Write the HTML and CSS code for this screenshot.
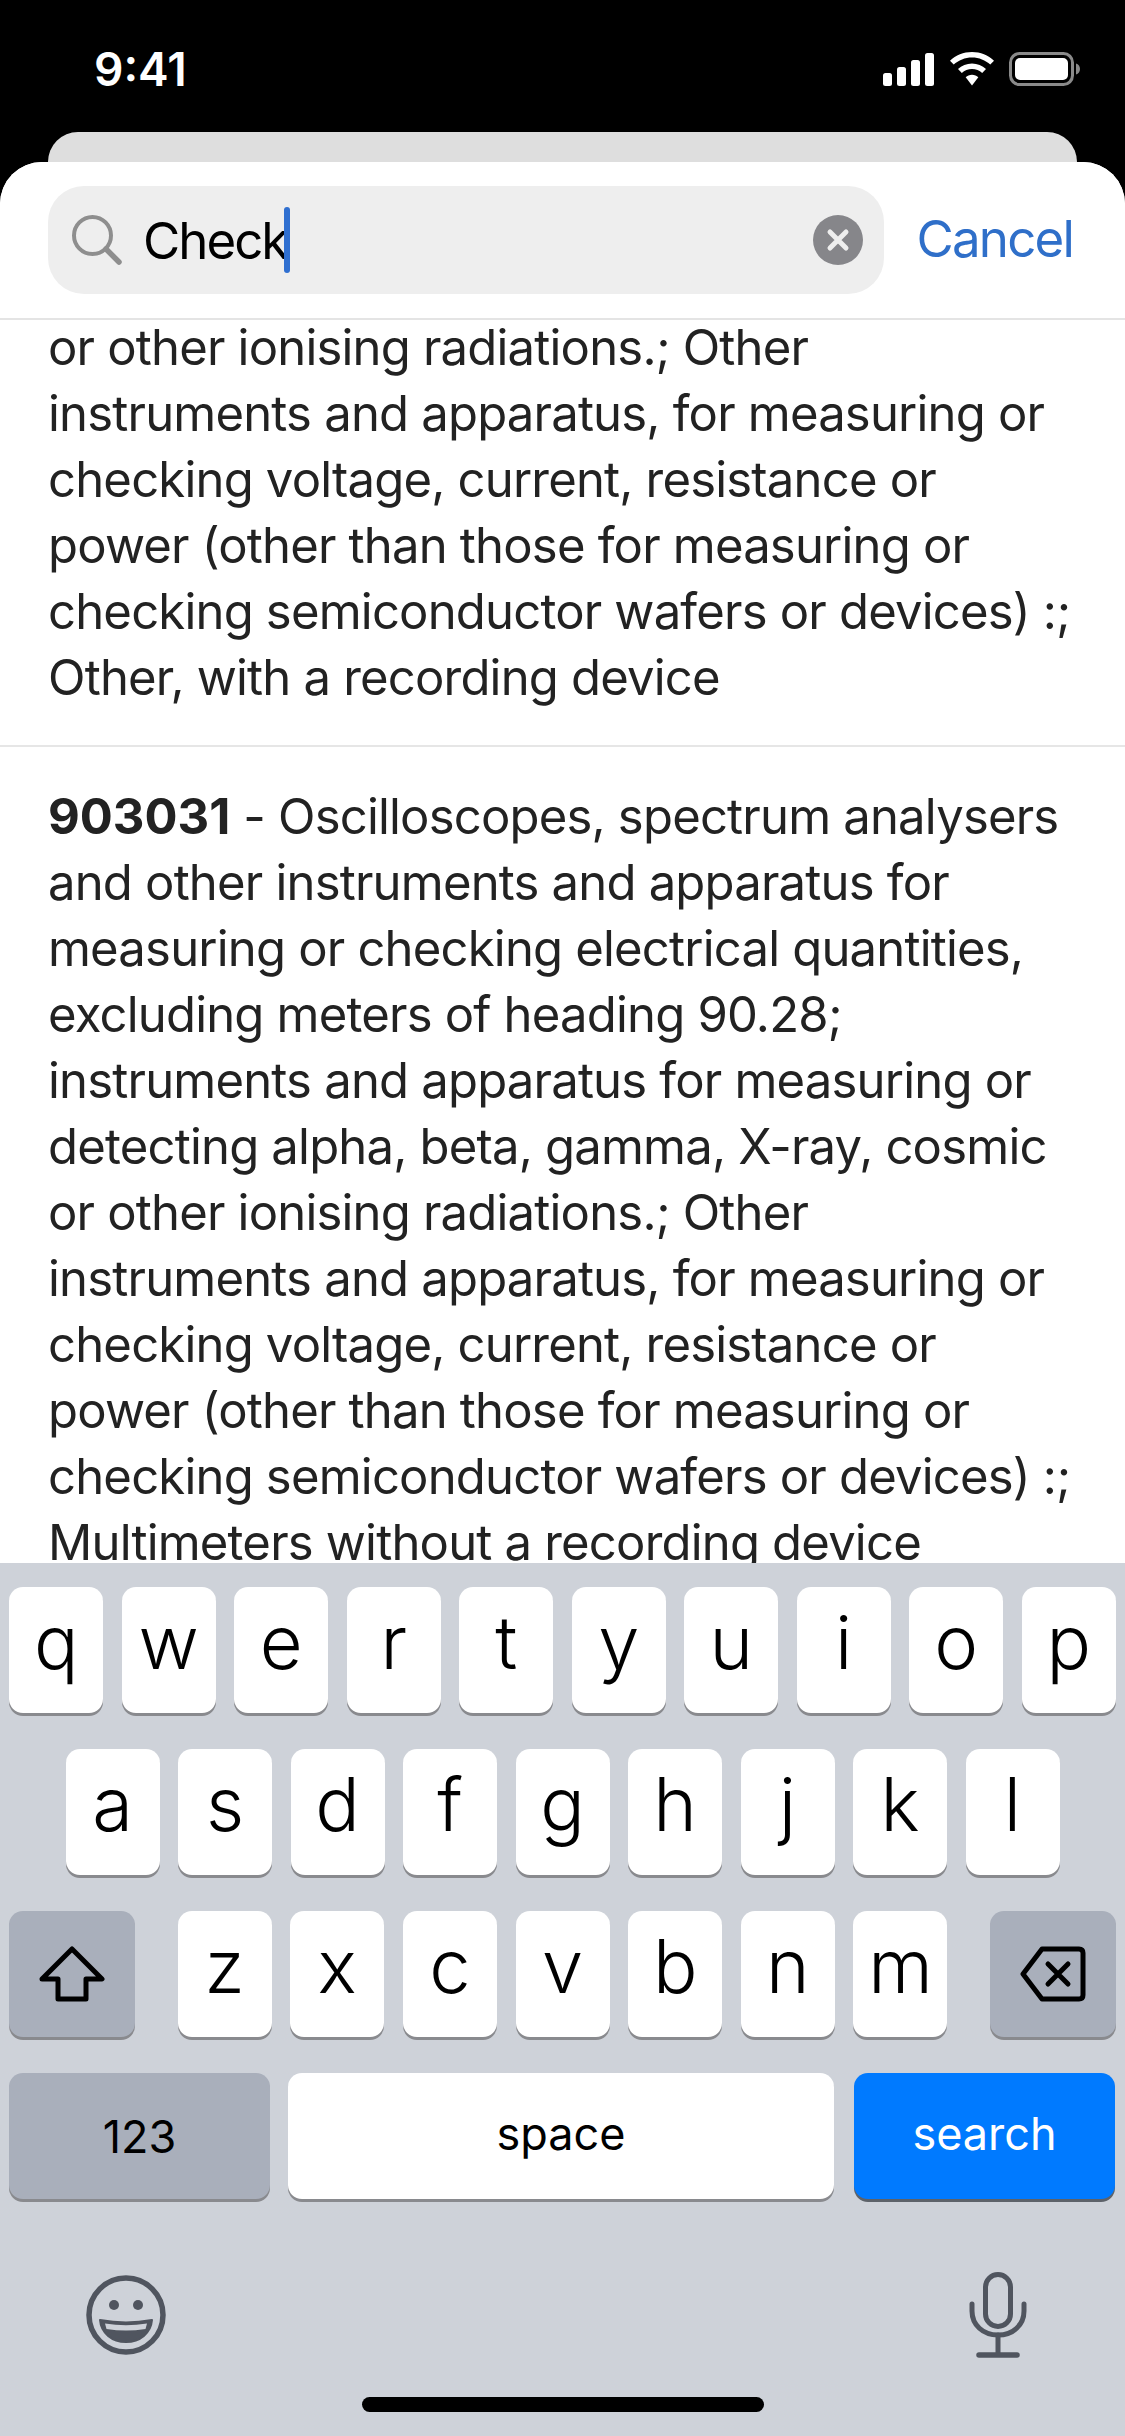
FILE: index.html
```html
<!DOCTYPE html>
<html lang="en">
<head>
    <meta charset="UTF-8">
    <meta name="viewport" content="width=device-width, initial-scale=1.0">
    <title>Search</title>
    <link rel="stylesheet" href="styles.css">
</head>
<body>

<div class="phone">
    <div class="status">
        <span class="time">9:41</span>
        <div class="status-icons">
            <svg width="52" height="33" viewBox="0 0 52 33"><rect x="0" y="20" width="9" height="13" rx="2.500"/><rect x="14" y="14" width="9" height="19" rx="2.500"/><rect x="28" y="7" width="9" height="26" rx="2.500"/><rect x="42" y="0" width="9" height="33" rx="2.500"/></svg>
            <svg width="46" height="34" viewBox="0 0 46 34"><path d="M23 0C14.500 0 6.800 3.300 1 8.700L4.700 12.600C9.500 8.100 16 5.400 23 5.400S36.500 8.100 41.300 12.600L45 8.700C39.200 3.300 31.500 0 23 0Z"/><path d="M23 11.500C17.600 11.500 12.700 13.600 9 17L12.800 20.900C15.500 18.400 19.100 16.900 23 16.900S30.500 18.400 33.200 20.900L37 17C33.300 13.600 28.400 11.500 23 11.500Z"/><path d="M23 22.800C20.500 22.800 18.300 23.800 16.700 25.300L23 33.500L29.300 25.300C27.700 23.800 25.500 22.800 23 22.800Z"/></svg>
            <svg width="72" height="34" viewBox="0 0 72 34"><rect x="1.500" y="1.500" width="62" height="31" rx="9" fill="none" stroke="#8a8a8a" stroke-width="3"/><rect x="6" y="6" width="53" height="22" rx="5"/><path d="M67 11.500C69.500 12.300 71 14.500 71 17S69.500 21.700 67 22.500Z" fill="#8a8a8a"/></svg>
        </div>
    </div>

    <div class="card-behind"></div>

    <div class="sheet">
        <div class="search-header">
            <div class="search-field">
                <svg class="search-icon" width="50" height="50" viewBox="0 0 50 50" fill="none" stroke="#8e8e8e"><circle cx="20.500" cy="20.500" r="18.500" stroke-width="4"/><path d="M34 34L47 47" stroke-width="5.500" stroke-linecap="round"/></svg>
                <span class="search-text">Check</span>
                <span class="caret"></span>
                <svg class="clear-icon" width="50" height="50" viewBox="0 0 50 50"><circle cx="25" cy="25" r="25" fill="#86868a"/><path d="M17 17L33 33M33 17L17 33" stroke="#eeeeee" stroke-width="5" stroke-linecap="round"/></svg>
            </div>
            <span class="cancel">Cancel</span>
        </div>

        <div class="results">
            <div class="result">
                or other ionising radiations.; Other<br>
                instruments and apparatus, for measuring or<br>
                checking voltage, current, resistance or<br>
                power (other than those for measuring or<br>
                checking semiconductor wafers or devices) :;<br>
                Other, with a recording device
            </div>
            <div class="result">
                <b>903031</b> - Oscilloscopes, spectrum analysers<br>
                and other instruments and apparatus for<br>
                measuring or checking electrical quantities,<br>
                excluding meters of heading 90.28;<br>
                instruments and apparatus for measuring or<br>
                detecting alpha, beta, gamma, X-ray, cosmic<br>
                or other ionising radiations.; Other<br>
                instruments and apparatus, for measuring or<br>
                checking voltage, current, resistance or<br>
                power (other than those for measuring or<br>
                checking semiconductor wafers or devices) :;<br>
                Multimeters without a recording device
            </div>
        </div>

        <div class="keyboard">
            <div class="key-row">
                <div class="key">q</div><div class="key">w</div><div class="key">e</div><div class="key">r</div><div class="key">t</div><div class="key">y</div><div class="key">u</div><div class="key">i</div><div class="key">o</div><div class="key">p</div>
            </div>
            <div class="key-row">
                <div class="key">a</div><div class="key">s</div><div class="key">d</div><div class="key">f</div><div class="key">g</div><div class="key">h</div><div class="key">j</div><div class="key">k</div><div class="key">l</div>
            </div>
            <div class="key-row row-split">
                <div class="key key-fn">
                    <svg width="66" height="56" viewBox="0 0 66 56" fill="none" stroke="#000" stroke-width="5" stroke-linejoin="round"><path d="M33 3L63 33H47V53H19V33H3Z"/></svg>
                </div>
                <div class="letters">
                    <div class="key">z</div><div class="key">x</div><div class="key">c</div><div class="key">v</div><div class="key">b</div><div class="key">n</div><div class="key">m</div>
                </div>
                <div class="key key-fn">
                    <svg width="66" height="56" viewBox="0 0 66 56" fill="none" stroke="#000" stroke-width="5" stroke-linejoin="round" stroke-linecap="round"><path d="M22 3H59Q63 3 63 7V49Q63 53 59 53H22L3 28Z"/><path d="M28 18L48 38M48 18L28 38"/></svg>
                </div>
            </div>
            <div class="key-row bottom-row">
                <div class="key key-fn key-123">123</div>
                <div class="key key-space">space</div>
                <div class="key key-search">search</div>
            </div>
            <div class="kb-extras">
                <svg width="80" height="80" viewBox="0 0 80 80"><circle cx="40" cy="40" r="37" fill="none" stroke="#50555f" stroke-width="5.500"/><circle cx="28" cy="30" r="5" fill="#50555f"/><circle cx="52" cy="30" r="5" fill="#50555f"/><path d="M14 45Q40 50 66 45C65 58 54 67 40 67S15 58 14 45Z" fill="#50555f" stroke="#50555f" stroke-width="2" stroke-linejoin="round"/><path d="M19 48.500Q40 52 61 48.500L59.500 54Q40 57 20.500 54Z" fill="#ced2d9"/></svg>
                <svg width="58" height="86" viewBox="0 0 58 86" fill="none" stroke="#50555f" stroke-width="5" stroke-linecap="round"><rect x="16.500" y="2.500" width="25" height="52" rx="12.500"/><path d="M3 32V39C3 53 14 63 29 63S55 53 55 39V32"/><path d="M29 63V82"/><path d="M10 83H48" stroke-width="5.500"/></svg>
            </div>
            <div class="home-bar"></div>
        </div>
    </div>
</div>

</body>
</html>
```

FILE: styles.css
```css
*{
    box-sizing: border-box;
}

body{
    margin: 0;
    background-color: #000;
    font-family: Inter, "Liberation Sans", sans-serif;
}

.phone{
    width: 1125px;
    height: 2436px;
    display: flex;
    flex-direction: column;
    overflow: hidden;
}

.status{
    height: 132px;
    padding: 44px 44px 0 94px;
    display: flex;
    justify-content: space-between;
    align-items: flex-start;
    color: #fff;
}

.time{
    font-size: 46px;
    font-weight: 600;
    line-height: 50px;
}

.status-icons{
    display: flex;
    align-items: center;
    gap: 14px;
    padding-top: 8px;
}

.status-icons svg{
    fill: #fff;
}

.card-behind{
    height: 30px;
    margin: 0 48px;
    background-color: #dedede;
    border-radius: 30px 30px 0 0;
}

.sheet{
    flex: 1;
    min-height: 0;
    display: flex;
    flex-direction: column;
    background-color: #fff;
    border-radius: 42px 42px 0 0;
    overflow: hidden;
}

.search-header{
    height: 158px;
    flex-shrink: 0;
    padding: 24px 52px 0 48px;
    display: flex;
    align-items: flex-start;
    justify-content: space-between;
    border-bottom: 2px solid #e4e4e4;
    background-color: #fff;
    position: relative;
    z-index: 1;
}

.search-field{
    width: 836px;
    height: 108px;
    padding: 0 21px 0 24px;
    display: flex;
    align-items: center;
    background-color: #eeeeee;
    border-radius: 36px;
}

.search-icon{
    flex-shrink: 0;
    margin-right: 21px;
}

.search-text{
    font-size: 51px;
    letter-spacing: -2px;
    color: #000;
}

.caret{
    width: 6px;
    height: 66px;
    margin-left: -3px;
    background-color: #2f6fd0;
    border-radius: 3px;
}

.clear-icon{
    margin-left: auto;
}

.cancel{
    font-size: 51px;
    letter-spacing: -1.8px;
    line-height: 106px;
    color: #2f6fc9;
}

.results{
    flex: 1;
    min-height: 0;
    overflow: hidden;
    margin-top: -5px;
}

.result{
    padding: 0 20px 34px 48px;
    margin-bottom: 37px;
    border-bottom: 2px solid #e6e6e6;
    font-size: 49px;
    letter-spacing: -0.8px;
    line-height: 66px;
    color: #222;
    white-space: nowrap;
}

.result b{
    font-weight: 700;
    letter-spacing: 0;
}

.keyboard{
    height: 873px;
    flex-shrink: 0;
    padding: 24px 9px 0;
    background-color: #ced2d9;
    display: flex;
    flex-direction: column;
    gap: 36px;
    position: relative;
}

.key-row{
    display: flex;
    justify-content: center;
    gap: 18.5px;
}

.row-split{
    justify-content: space-between;
    gap: 0;
}

.letters{
    display: flex;
    gap: 18.67px;
}

.key{
    width: 94px;
    height: 126px;
    padding-bottom: 16px;
    display: flex;
    align-items: center;
    justify-content: center;
    background-color: #fff;
    border-radius: 14px;
    box-shadow: 0 3px 0 #898a8e;
    font-size: 74px;
    font-weight: 300;
    color: #000;
}

.key-fn{
    width: 126px;
    background-color: #a9afbb;
    padding-bottom: 0;
}

.bottom-row{
    justify-content: flex-start;
    gap: 18px;
}

.key-123{
    width: 261px;
    font-size: 45px;
    font-weight: 400;
}

.key-space{
    width: 546px;
    font-size: 45px;
    font-weight: 400;
    margin-right: 2px;
    padding-bottom: 6px;
}

.key-search{
    width: 261px;
    background-color: #007aff;
    color: #fff;
    font-size: 45px;
    font-weight: 400;
    padding-bottom: 6px;
    box-shadow: 0 3px 0 #5d6269;
}

.kb-extras{
    padding: 37px 89px 0 77px;
    display: flex;
    justify-content: space-between;
    align-items: center;
}

.home-bar{
    position: absolute;
    left: 362px;
    bottom: 24px;
    width: 402px;
    height: 15px;
    background-color: #000;
    border-radius: 8px;
}
```
